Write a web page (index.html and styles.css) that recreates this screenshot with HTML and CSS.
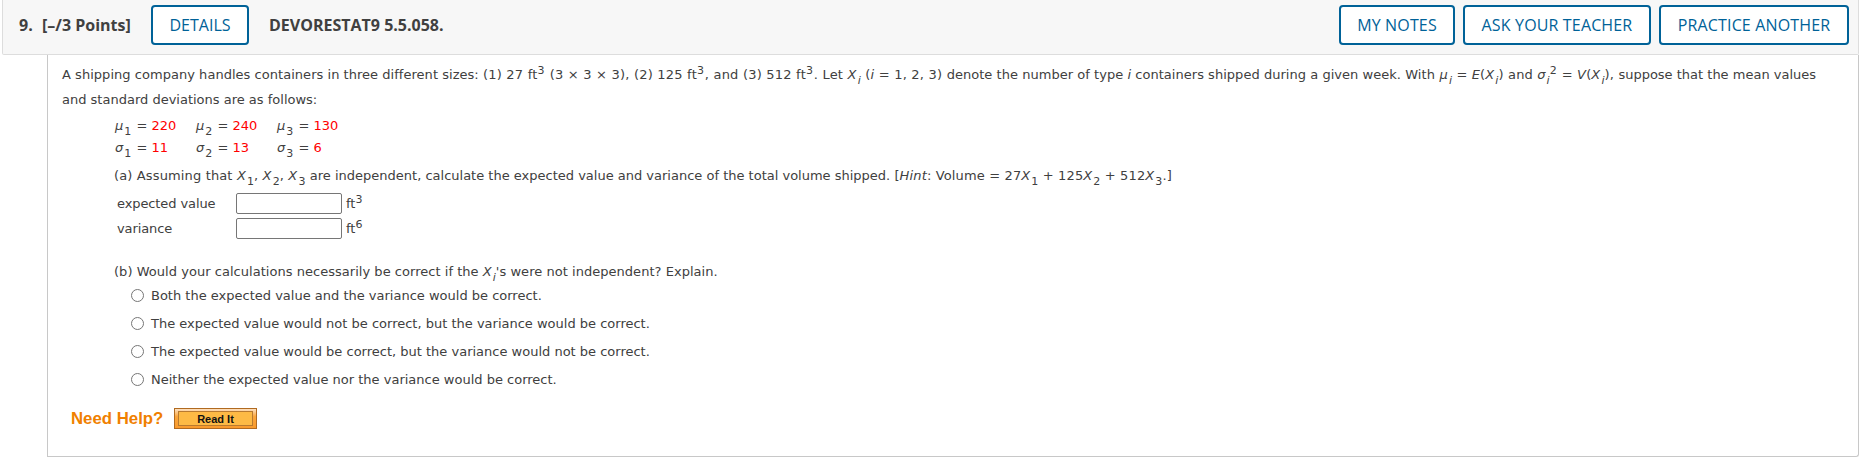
FILE: index.html
```html
<!DOCTYPE html>
<html>
  <head>
    <title>DEVORESTAT9 5.5.058</title>
    <meta charset="UTF-8">
    <link rel="stylesheet" href="styles.css">
  </head>
  <body>
    <div class="header">
      <span class="number">9.</span>
      <span class="points">[–/3 Points]</span>
      <a class="btn details">DETAILS</a>
      <span class="name">DEVORESTAT9 5.5.058.</span>
      <div class="actions">
        <a class="btn notes">MY NOTES</a>
        <a class="btn ask">ASK YOUR TEACHER</a>
        <a class="btn practice">PRACTICE ANOTHER</a>
      </div>
    </div>
    <div class="question">
      <p class="intro"><span class="text">A shipping company handles containers in three different sizes: </span><span class="sizes">(1) 27 ft<sup>3</sup> (3 × 3 × 3), (2) 125 ft<sup>3</sup>, and (3) 512 ft<sup>3</sup>. Let <i>X</i><sub><i>i</i></sub> (<i>i</i> = 1, 2, 3) </span><span class="text">denote the number of type <i>i</i> containers shipped during a given week. </span><span class="math">With <i>μ</i><sub><i>i</i></sub> = <i>E</i>(<i>X</i><sub><i>i</i></sub>) and <i>σ</i><sub><i>i</i></sub><sup>2</sup> = <i>V</i>(<i>X</i><sub><i>i</i></sub>), </span>suppose that the mean values<br>and standard deviations are as follows:</p>
      <div class="part">
        <div class="values">
          <span><i>μ</i><sub>1</sub> = <b>220</b></span>
          <span><i>μ</i><sub>2</sub> = <b>240</b></span>
          <span><i>μ</i><sub>3</sub> = <b>130</b></span>
          <span><i>σ</i><sub>1</sub> = <b>11</b></span>
          <span><i>σ</i><sub>2</sub> = <b>13</b></span>
          <span><i>σ</i><sub>3</sub> = <b>6</b></span>
        </div>
        <p class="ask-a"><span class="math">(a) Assuming that <i>X</i><sub>1</sub>, <i>X</i><sub>2</sub>, <i>X</i><sub>3</sub> </span>are independent, calculate the expected value and variance of the total volume shipped. <span class="math">[<i>Hint</i>: Volume = 27<i>X</i><sub>1</sub> + 125<i>X</i><sub>2</sub> + 512<i>X</i><sub>3</sub>.]</span></p>
        <div class="answers">
          <div class="answer"><label>expected value</label><input type="text"><span>ft<sup>3</sup></span></div>
          <div class="answer"><label>variance</label><input type="text"><span>ft<sup>6</sup></span></div>
        </div>
        <p class="ask-b"><span class="text">(b) Would your calculations necessarily be correct if the <i>X</i><sub><i>i</i></sub>'s were not independent? Explain.</span></p>
        <div class="choices">
          <label><input type="radio" name="b">Both the expected value and the variance would be correct.</label>
          <label><input type="radio" name="b">The expected value would not be correct, but the variance would be correct.</label>
          <label><input type="radio" name="b">The expected value would be correct, but the variance would not be correct.</label>
          <label><input type="radio" name="b">Neither the expected value nor the variance would be correct.</label>
        </div>
      </div>
      <div class="help">
        <span class="need">Need Help?</span>
        <a class="read"><span>Read It</span></a>
      </div>
    </div>
  </body>
</html>
```
FILE: styles.css
```css
* {
  box-sizing: border-box;
}
body {
  margin: 0 10px 0 2px;
  background: white;
  color: #404040;
  font: 13px/25px "DejaVu Sans", Verdana, sans-serif;
  overflow: hidden;
}
p {
  margin: 0;
  white-space: nowrap;
}
sub, sup {
  font-size: 11px;
  line-height: 0;
  vertical-align: -5px;
}
sub {
  margin-left: 1px;
}
sup {
  vertical-align: 5px;
  margin-right: 0.6px;
}
.text {
  letter-spacing: 0.035px;
}
.sizes {
  letter-spacing: 0.21px;
}
.math {
  letter-spacing: 0.14px;
}

/* top bar */
.header {
  display: flex;
  align-items: center;
  height: 55px;
  padding: 0 9px 5px 16px;
  background: #f7f7f7;
  border: 1px solid #ddd;
  border-top: 0;
  border-radius: 0 0 2px 2px;
  font: bold 16px/40px "Open Sans", sans-serif;
  white-space: nowrap;
}
.number {
  width: 23px;
}
.points {
  width: 109px;
}
.btn {
  display: block;
  height: 40px;
  line-height: 36px;
  text-align: center;
  background: white;
  border: 2px solid #006298;
  border-radius: 4px;
  color: #006298;
  font-weight: normal;
}
.details {
  width: 98px;
  margin-right: 20px;
}
.actions {
  display: flex;
  gap: 8px;
  margin-left: auto;
  letter-spacing: 0.15px;
}
.notes {
  width: 116px;
}
.ask {
  width: 188px;
}
.practice {
  width: 190px;
}

/* question body */
.question {
  height: 402px;
  margin-left: 45px;
  padding: 7px 0 0 14px;
  border: 1px solid #c8c8c8;
  border-top: 0;
  border-radius: 0 0 3px 0;
}
.part {
  padding-left: 53px;
}
.values {
  display: grid;
  grid-template-columns: 81px 81px 81px;
  grid-auto-rows: 22px;
  line-height: 22px;
  padding-top: 3px;
  white-space: nowrap;
}
.values sub {
  margin-right: 1px;
}
.values b {
  color: red;
  font-weight: normal;
}
.ask-a {
  margin: 4px 0 0 -1px;
}
.answers {
  padding: 3px 0 0 2px;
}
.answer {
  display: flex;
  align-items: center;
  height: 25px;
}
.answer label {
  width: 119px;
  letter-spacing: -0.1px;
}
.answer input {
  width: 106px;
  height: 21px;
  margin: 0 4px 0 0;
  border: 1px solid #767676;
  border-radius: 2px;
}
.ask-b {
  margin: 18px 0 0 -1px;
}
.choices {
  margin-top: -2px;
}
.choices label {
  display: flex;
  align-items: center;
  height: 27.8px;
  padding-left: 16px;
  white-space: nowrap;
}
.choices input {
  width: 13px;
  height: 13px;
  margin: 0 7px 0 0;
}
.help {
  display: flex;
  align-items: center;
  margin: 13px 0 0 9px;
  font-family: "Liberation Sans", Arial, sans-serif;
  font-weight: bold;
}
.need {
  width: 103px;
  color: #f08000;
  font-size: 16.8px;
}
.read {
  width: 83px;
  height: 21px;
  padding: 2px 3px;
  border: 1px solid #b06a20;
  background: linear-gradient(#fde0c0, #fba63c 40%, #f99a2c);
  color: #111;
  font-size: 11px;
}
.read span {
  display: block;
  height: 15px;
  line-height: 14px;
  text-align: center;
  border: 1px solid #b87a30;
  background: #fdba45;
}
```
